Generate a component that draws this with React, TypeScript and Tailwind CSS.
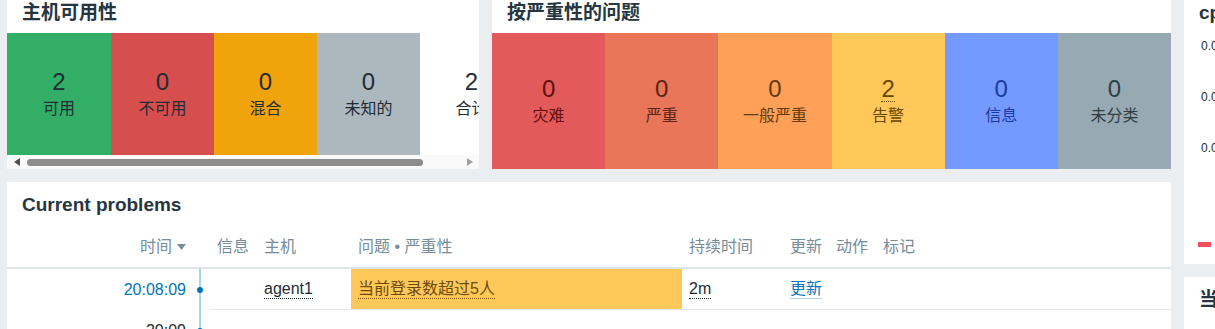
import React from "react";

const HOST_BLOCKS = [
  { value: "2", label: "可用", bg: "bg-[#33ae66]", w: "w-[104px]" },
  { value: "0", label: "不可用", bg: "bg-[#d64e4e]", w: "w-[103px]" },
  { value: "0", label: "混合", bg: "bg-[#f0a30a]", w: "w-[103px]" },
  { value: "0", label: "未知的", bg: "bg-[#acb7be]", w: "w-[103px]" },
  { value: "2", label: "合计", bg: "bg-white", w: "w-[103px]" },
];

const SEVERITY = [
  { value: "0", label: "灾难", bg: "bg-[#e45959]", fg: "text-[#5c1010]" },
  { value: "0", label: "严重", bg: "bg-[#e97659]", fg: "text-[#5a2314]" },
  { value: "0", label: "一般严重", bg: "bg-[#ffa059]", fg: "text-[#663a0d]" },
  { value: "2", label: "告警", bg: "bg-[#ffc859]", fg: "text-[#664a00]", link: true },
  { value: "0", label: "信息", bg: "bg-[#7499ff]", fg: "text-[#1a3b9e]" },
  { value: "0", label: "未分类", bg: "bg-[#97aab3]", fg: "text-[#2f3d44]" },
];

function Title({ children }: { children: React.ReactNode }) {
  return (
    <div className="h-[43px] shrink-0 px-[15px] pt-[10px] text-[19px] font-bold leading-[25px] text-[#263640] whitespace-nowrap">
      {children}
    </div>
  );
}

function Arrow({ dir, color }: { dir: "left" | "right"; color: string }) {
  return (
    <svg width="6" height="8" viewBox="0 0 6 8">
      <path d={dir === "left" ? "M6 0v8L0 4z" : "M0 0v8l6-4z"} fill={color} />
    </svg>
  );
}

function HostAvailability() {
  return (
    <div className="flex h-[179px] w-[472px] shrink-0 flex-col bg-white">
      <Title>主机可用性</Title>
      <div className="flex h-[122px] overflow-hidden">
        {HOST_BLOCKS.map((b, i) => (
          <div key={i} className={`flex ${b.w} shrink-0 flex-col items-center justify-center ${b.bg}`}>
            <div className="text-[24px] leading-[30px]">{b.value}</div>
            <div className="text-[16px] leading-[24px] whitespace-nowrap">{b.label}</div>
          </div>
        ))}
      </div>
      <div className="flex h-[14px] items-center bg-[#fafafa] pl-[7px] pr-[6px]">
        <Arrow dir="left" color="#505050" />
        <div className="ml-[7px] h-[7px] w-[396px] rounded-full bg-[#8c8c8c]" />
        <div className="ml-auto flex">
          <Arrow dir="right" color="#a3a3a3" />
        </div>
      </div>
    </div>
  );
}

function ProblemsBySeverity() {
  return (
    <div className="flex h-[179px] w-[679px] shrink-0 flex-col bg-white">
      <Title>按严重性的问题</Title>
      <div className="flex flex-1">
        {SEVERITY.map((s, i) => (
          <div key={i} className={`flex flex-1 flex-col items-center justify-center ${s.bg} ${s.fg}`}>
            <div className="flex h-[30px] items-center">
              <span
                className={`inline-block text-[24px] leading-[24px] ${
                  s.link ? "border-b border-dotted border-[#664a00]" : ""
                }`}
              >
                {s.value}
              </span>
            </div>
            <div className="text-[16px] leading-[24px] whitespace-nowrap">{s.label}</div>
          </div>
        ))}
      </div>
    </div>
  );
}

function CurrentProblems() {
  return (
    <div className="flex h-[200px] flex-col bg-white">
      <div className="h-[45px] shrink-0 px-[15px] pt-[10px] text-[19px] font-bold leading-[25px] text-[#263640]">
        Current problems
      </div>
      <div className="flex h-[42px] items-center border-b-2 border-[#dfe4e7] text-[16px] text-[#768d99] whitespace-nowrap">
        <div className="flex w-[186px] items-center justify-end pr-[7px]">
          时间
          <svg width="9" height="6" viewBox="0 0 9 6" className="ml-[5px]">
            <path d="M0 0h9L4.5 6z" fill="#768d99" />
          </svg>
        </div>
        <div className="w-[17px]" />
        <div className="w-[47px] pl-[7px]">信息</div>
        <div className="w-[94px] pl-[7px]">主机</div>
        <div className="w-[331px] pl-[7px]">问题 • 严重性</div>
        <div className="w-[101px] pl-[7px]">持续时间</div>
        <div className="w-[46px] pl-[7px]">更新</div>
        <div className="w-[47px] pl-[7px]">动作</div>
        <div className="flex-1 pl-[7px]">标记</div>
      </div>

      <div className="flex h-[41px] text-[16px] whitespace-nowrap">
        <div className="flex w-[186px] items-center justify-end pr-[7px] text-[#0275b8]">20:08:09</div>
        <div className="flex w-[17px] pl-[6px]">
          <div className="flex w-[2px] items-center justify-center bg-[#a8d3f0]">
            <div className="h-[6px] w-[6px] shrink-0 rounded-full bg-[#0275b8]" />
          </div>
        </div>
        <div className="flex flex-1 border-b border-[#e6e9ec]">
          <div className="w-[47px]" />
          <div className="flex w-[94px] items-center pl-[7px]">
            <span className="inline-block border-b border-dotted border-[#1f2c33] leading-[18px]">agent1</span>
          </div>
          <div className="flex w-[331px] items-center bg-[#ffc859] pl-[7px] text-[#6b4c0c]">
            <span className="inline-block border-b border-dotted border-[#6b4c0c] leading-[18px]">
              当前登录数超过5人
            </span>
          </div>
          <div className="flex w-[101px] items-center pl-[7px]">
            <span className="inline-block border-b border-dotted border-[#1f2c33] leading-[18px]">2m</span>
          </div>
          <div className="flex w-[46px] items-center pl-[7px] text-[#0275b8]">
            <span className="inline-block border-b border-[#b8d2e5] leading-[18px]">更新</span>
          </div>
          <div className="w-[47px]" />
          <div className="flex-1" />
        </div>
      </div>

      <div className="flex h-[41px] text-[16px] whitespace-nowrap">
        <div className="flex w-[186px] items-center justify-end pr-[7px]">20:09</div>
        <div className="flex w-[17px] pl-[6px]">
          <div className="flex w-[2px] items-center justify-center bg-[#a8d3f0]">
            <div className="h-[6px] w-[6px] shrink-0 rounded-full bg-[#0275b8]" />
          </div>
        </div>
        <div className="flex-1 border-b border-[#e6e9ec]" />
      </div>
    </div>
  );
}

function CpuGraph() {
  return (
    <div className="flex h-[274px] w-[300px] shrink-0 flex-col bg-white">
      <Title>cpu 使用率</Title>
      <div className="mt-[5px] flex flex-col gap-[35px] pl-[17px] text-[12px] leading-[16px]">
        <div>0.06</div>
        <div>0.04</div>
        <div>0.02</div>
      </div>
      <div className="ml-[14px] mt-[86px] h-[5px] w-[13px] bg-[#f24f5f]" />
    </div>
  );
}

export default function App() {
  return (
    <div className="h-[329px] w-[1215px] overflow-hidden bg-[#ebeef0] font-['Liberation_Sans','Noto_Sans_CJK_SC',sans-serif] text-[#1f2c33]">
      <div className="-mt-[10px] flex gap-[13px] pl-[7px]">
        <div className="flex w-[1164px] shrink-0 flex-col gap-[13px]">
          <div className="flex gap-[13px]">
            <HostAvailability />
            <ProblemsBySeverity />
          </div>
          <CurrentProblems />
        </div>
        <div className="flex w-[300px] shrink-0 flex-col gap-[13px]">
          <CpuGraph />
          <div className="h-[200px] bg-white">
            <Title>当前登录用户</Title>
          </div>
        </div>
      </div>
    </div>
  );
}
